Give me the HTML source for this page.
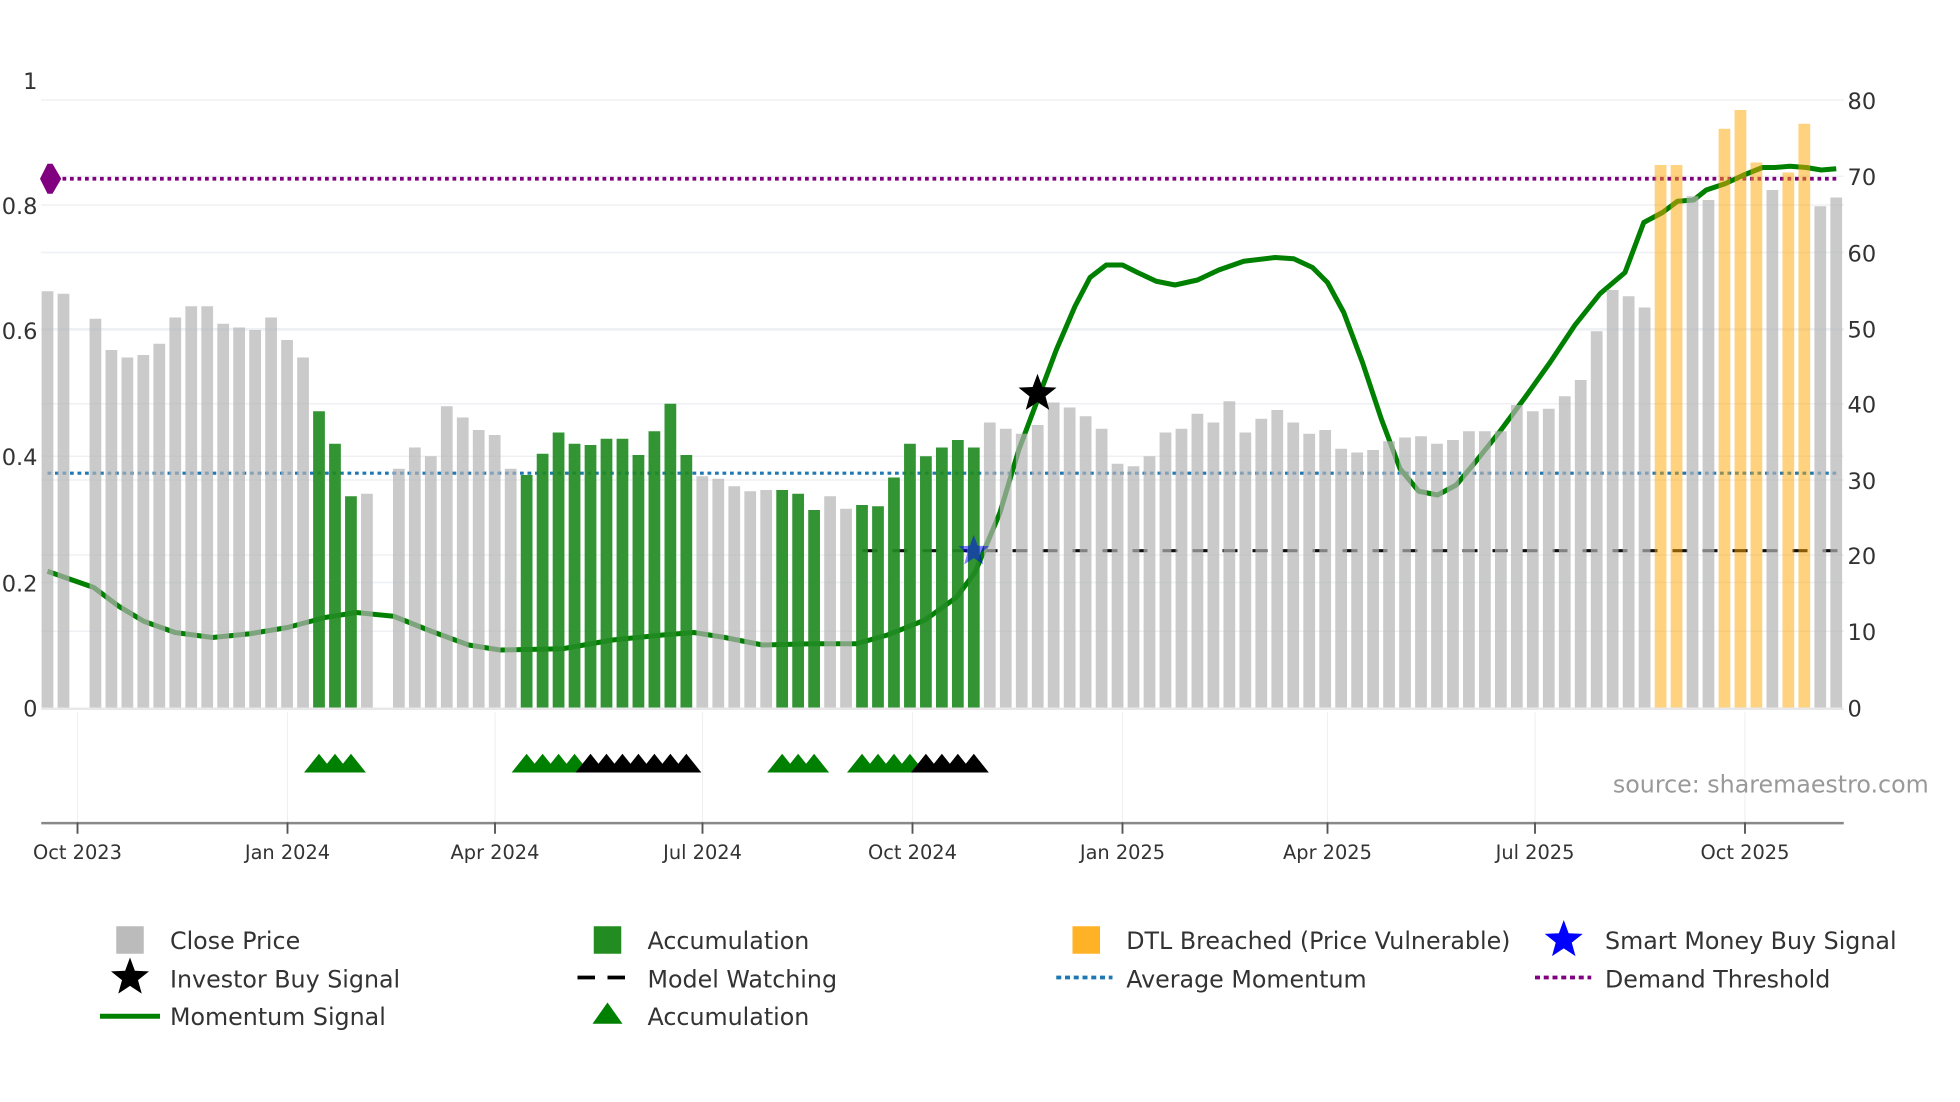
<!DOCTYPE html>
<html><head><meta charset="utf-8"><style>
html,body{margin:0;padding:0;background:#fff;width:1960px;height:1102px;overflow:hidden}
svg text{font-family:"DejaVu Sans","Liberation Sans",sans-serif;fill:#333}
</style></head><body>
<svg id="s" width="1960" height="1102" viewBox="0 0 1568 881.6" preserveAspectRatio="none" xmlns="http://www.w3.org/2000/svg">
<g id="grid" stroke="#eef0f4" stroke-width="1.2"></g>
<line x1="33" y1="567" x2="1475" y2="567" stroke="#e8e8e8" stroke-width="2"/>
<g stroke="#eef0f4" stroke-width="1">
<line x1="62" y1="570" x2="62" y2="658"/><line x1="230" y1="570" x2="230" y2="658"/><line x1="396" y1="570" x2="396" y2="658"/><line x1="562" y1="570" x2="562" y2="658"/><line x1="730" y1="570" x2="730" y2="658"/><line x1="898" y1="570" x2="898" y2="658"/><line x1="1062" y1="570" x2="1062" y2="658"/><line x1="1228" y1="570" x2="1228" y2="658"/><line x1="1396" y1="570" x2="1396" y2="658"/>
</g>
<line x1="38" y1="143" x2="1470" y2="143" stroke="#800080" stroke-width="3" stroke-dasharray="3,3"/>
<line x1="38" y1="378.5" x2="1470" y2="378.5" stroke="#1f77b4" stroke-width="2.5" stroke-dasharray="3,3"/>
<line x1="690" y1="440.5" x2="1470" y2="440.5" stroke="#111" stroke-width="2.5" stroke-dasharray="12,12"/>
<path d="M32,143 L38,131 L42,131 L49,143 L42,155 L38,155 Z" fill="#800080"/>
<polyline fill="none" stroke="#008000" stroke-width="4" stroke-linejoin="round" points="38,457 55,463 75,470 95,485 115,497 140,506 170,510 200,507 230,502 260,494 285,490 315,493 345,505 375,516 400,520 450,519 490,512 530,508 555,506 580,510 610,516 650,515 685,515 710,508 740,496 765,478 780,458 800,410 815,360 830,320 845,280 860,245 872,222 885,212 898,212 910,218 925,225 940,228 958,224 975,216 995,209 1020,206 1035,207 1050,214 1062,226 1075,250 1090,290 1105,335 1120,375 1135,393 1150,396 1165,388 1180,370 1200,345 1220,318 1240,290 1260,260 1280,235 1300,218 1315,178 1330,170 1342,161 1355,160 1365,152 1380,147 1395,140 1410,134 1420,134 1432,133 1445,134 1457,136 1469,135"/>
<g id="bars"></g>
<path id="bstar" fill="#0000ff" fill-opacity="0.5" d=""/>
<path id="kstar" fill="#000" d=""/>
<g id="tri"></g>
<line x1="33" y1="658.5" x2="1475" y2="658.5" stroke="#888" stroke-width="2"/>
<g stroke="#555" stroke-width="1.5">
<line x1="62" y1="658" x2="62" y2="667"/><line x1="230" y1="658" x2="230" y2="667"/><line x1="396" y1="658" x2="396" y2="667"/><line x1="562" y1="658" x2="562" y2="667"/><line x1="730" y1="658" x2="730" y2="667"/><line x1="898" y1="658" x2="898" y2="667"/><line x1="1062" y1="658" x2="1062" y2="667"/><line x1="1228" y1="658" x2="1228" y2="667"/><line x1="1396" y1="658" x2="1396" y2="667"/>
</g>
<g font-size="15.5" text-anchor="middle">
<text x="62" y="687">Oct 2023</text><text x="230" y="687">Jan 2024</text><text x="396" y="687">Apr 2024</text><text x="562" y="687">Jul 2024</text><text x="730" y="687">Oct 2024</text><text x="898" y="687">Jan 2025</text><text x="1062" y="687">Apr 2025</text><text x="1228" y="687">Jul 2025</text><text x="1396" y="687">Oct 2025</text>
</g>
<g font-size="18" text-anchor="end">
<text x="30" y="71">1</text><text x="30" y="171">0.8</text><text x="30" y="271">0.6</text><text x="30" y="372">0.4</text><text x="30" y="473">0.2</text><text x="30" y="573">0</text>
</g>
<g font-size="18">
<text x="1478" y="87">80</text><text x="1478" y="148">70</text><text x="1478" y="209">60</text><text x="1478" y="270">50</text><text x="1478" y="330">40</text><text x="1478" y="391">30</text><text x="1478" y="451">20</text><text x="1478" y="512">10</text><text x="1478" y="573">0</text>
</g>
<text x="1543" y="634" font-size="19" text-anchor="end" style="fill:#999">source: sharemaestro.com</text>
<g font-size="19">
<rect x="93" y="741" width="22" height="22" fill="#bbb"/><text x="136" y="759">Close Price</text>
<rect x="475" y="741" width="22" height="22" fill="#228b22"/><text x="518" y="759">Accumulation</text>
<rect x="858" y="741" width="22" height="22" fill="#ffa500" fill-opacity="0.85"/><text x="901" y="759">DTL Breached (Price Vulnerable)</text>
<path id="lbstar" fill="#0000ff" d=""/><text x="1284" y="759">Smart Money Buy Signal</text>
<path id="lkstar" fill="#000" d=""/><text x="136" y="790">Investor Buy Signal</text>
<line x1="462" y1="782" x2="508" y2="782" stroke="#000" stroke-width="3" stroke-dasharray="14,10"/><text x="518" y="790">Model Watching</text>
<line x1="845" y1="782" x2="890" y2="782" stroke="#1f77b4" stroke-width="3" stroke-dasharray="4,3"/><text x="901" y="790">Average Momentum</text>
<line x1="1228" y1="782" x2="1273" y2="782" stroke="#800080" stroke-width="3" stroke-dasharray="4,3"/><text x="1284" y="790">Demand Threshold</text>
<line x1="80" y1="813" x2="128" y2="813" stroke="#008000" stroke-width="4"/><text x="136" y="820">Momentum Signal</text>
<path d="M474,819 L486,802 L498,819 Z" fill="#008000"/><text x="518" y="820">Accumulation</text>
</g>
</svg>
<script>
var NS="http://www.w3.org/2000/svg";
function el(t,a,p){var e=document.createElementNS(NS,t);for(var k in a)e.setAttribute(k,a[k]);document.getElementById(p).appendChild(e);return e;}
[80,141,202,263,323,384,444,505,164,264,365,466].forEach(function(y){el('line',{x1:33,x2:1475,y1:y,y2:y},'grid');});
var tops=[233,235,null,255,280,286,284,275,254,245,245,259,262,264,254,272,286,329,355,397,395,null,375,358,365,325,334,344,348,375,380,363,346,355,356,351,351,364,345,323,364,381,383,389,393,392,392,395,408,397,407,404,405,382,355,365,358,352,358,338,343,347,340,322,326,333,343,371,373,365,346,343,331,338,321,346,335,328,338,347,344,359,362,360,353,350,349,355,352,345,345,345,324,329,327,317,304,265,232,237,246,132,132,157,160,103,88,130,152,138,99,165,158];
var green={17:1,18:1,19:1};
for(var i=30;i<=40;i++)green[i]=1;
[46,47,48].forEach(function(i){green[i]=1});
for(var i=51;i<=58;i++)green[i]=1;
var orange={101:1,102:1,105:1,106:1,107:1,109:1,110:1};
var n=tops.length,x0=38,dx=(1469-38)/(n-1);
tops.forEach(function(t,i){if(t==null)return;var x=x0+i*dx;
 var f=green[i]?'#228b22':orange[i]?'#ffa500':'#b4b4b4',o=green[i]?0.92:orange[i]?0.5:0.7;
 el('rect',{x:x-4.7,y:t,width:9.4,height:566-t,fill:f,'fill-opacity':o},'bars');});
function tri(i,c){var x=x0+i*dx;el('path',{d:'M'+(x-12)+',618 L'+x+',603 L'+(x+12)+',618 Z',fill:c},'tri');}
[17,18,19,30,31,32,33,46,47,48,51,52,53,54].forEach(function(i){tri(i,'#008000')});
[34,35,36,37,38,39,40,55,56,57,58].forEach(function(i){tri(i,'#000')});
function star(cx,cy,R){var r=R*0.42,d='';for(var k=0;k<10;k++){var a=-Math.PI/2+k*Math.PI/5,rr=k%2?r:R;d+=(k?'L':'M')+(cx+rr*Math.cos(a)).toFixed(1)+','+(cy+rr*Math.sin(a)).toFixed(1);}return d+'Z';}
document.getElementById('bstar').setAttribute('d',star(779,441,13));
document.getElementById('kstar').setAttribute('d',star(830,315,16));
document.getElementById('lbstar').setAttribute('d',star(1251,752,16));
document.getElementById('lkstar').setAttribute('d',star(104,782,16));
</script>
</body></html>
